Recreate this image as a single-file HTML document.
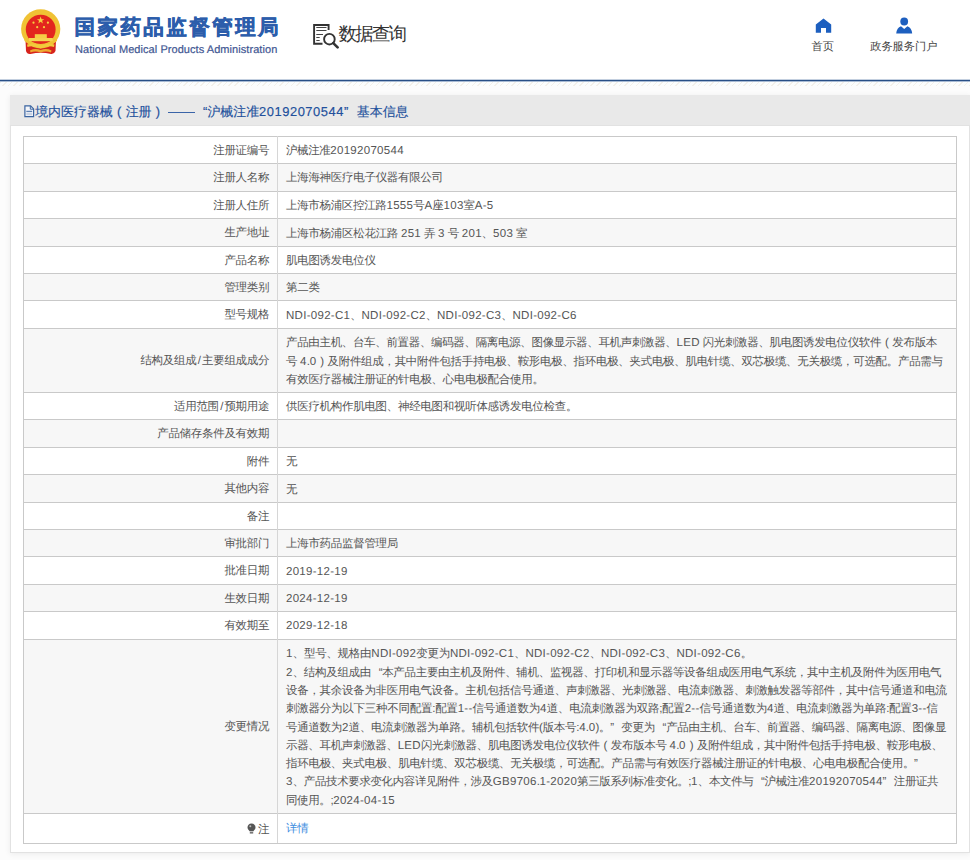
<!DOCTYPE html>
<html><head><meta charset="utf-8">
<style>
*{margin:0;padding:0;box-sizing:border-box}
html,body{width:970px;height:860px;overflow:hidden;background:#fff}
body{font-family:"Liberation Sans",sans-serif;text-rendering:geometricPrecision;position:relative;color:#555}
.a{position:absolute;white-space:nowrap}
.hl{position:absolute;left:23px;width:933px;height:1px;background:#c9c9c9}
.row{position:absolute;left:23px;width:933px}
.lab{position:absolute;right:700.8px;font-size:11.5px;white-space:nowrap;color:#555;letter-spacing:-0.3px}
.ql,.qr{font-style:normal;display:inline-block;width:1em;text-indent:0}
.ql{text-align:right}.pc{font-style:normal;display:inline-block;width:1em;text-align:center}.qr{text-align:left}
.l{font-weight:normal;letter-spacing:0.29px}
.val{position:absolute;left:286px;font-size:11.5px;white-space:nowrap;color:#555;line-height:18.3px;letter-spacing:-0.3px}
.val .ql,.val .qr,.val .pc{width:11.2px}
</style></head><body>


<div class="a" style="left:0;top:0;width:970px;height:80px;background:#fff"></div>
<svg class="a" style="left:18px;top:7px" width="46" height="50" viewBox="0 0 46 50">
  <path d="M7.5 33 L38 33 L37.5 44 Q36 47.5 33 47 Q22.7 44.5 12.5 47 Q9 47.5 8 44 Z" fill="#d7231c"/>
  <circle cx="22.7" cy="21.9" r="19.6" fill="#f0c234"/>
  <circle cx="22.7" cy="22.6" r="14.9" fill="#e3251e"/>
  <path d="M6.5 30 Q22.7 44 39 30 L39 34 Q22.7 47 6.5 34 Z" fill="#f0c234"/>
  <path d="M9 37.5 Q15 35.5 22.7 38.5 Q30.5 35.5 36.5 37.5 L36 40 Q30 38 22.7 41.5 Q15 38 9.5 40 Z" fill="#f3c93c"/>
  <path d="M12 43.5 Q17 41 22.7 43 Q28.5 41 33.5 43.5 L33 45.5 Q28 43.5 22.7 45.5 Q17 43.5 12.5 45.5Z" fill="#f0c234" opacity="0.85"/>
  <rect x="10.8" y="31" width="24" height="3.2" fill="#f6d350"/>
  <rect x="16.8" y="27.2" width="12" height="4" fill="#f5cc45"/>
  <polygon points="22.6,9.6 23.6,12.2 26.3,12.2 24.1,13.8 24.9,16.4 22.6,14.8 20.3,16.4 21.1,13.8 18.9,12.2 21.6,12.2" fill="#f6d040"/>
  <circle cx="15.5" cy="15.7" r="1.1" fill="#f6d040"/><circle cx="29.9" cy="15.7" r="1.1" fill="#f6d040"/>
  <circle cx="19.2" cy="20.2" r="1.1" fill="#f6d040"/><circle cx="26" cy="20.2" r="1.1" fill="#f6d040"/>
</svg>
<div class="a" id="t1" style="left:74.5px;top:13.5px;font-size:20.5px;font-weight:900;color:#2c5dab;letter-spacing:2.45px;-webkit-text-stroke:0.5px #2c5dab">国家药品监督管理局</div>
<div class="a" id="t2" style="left:75px;top:44px;font-size:11px;color:#3f5793;letter-spacing:0.06px;-webkit-text-stroke:0.2px #3f5793">National Medical Products Administration</div>
<svg class="a" style="left:312px;top:23px" width="28" height="26" viewBox="0 0 28 26">
  <path d="M10.5 20.8 H2.1 V2 H16.6 V7" fill="none" stroke="#333" stroke-width="1.9"/>
  <path d="M4.3 4.5 H14.5 M4.3 7.5 H14.5 M4.3 11.5 H11 M4.3 14.5 H7.7 M4.3 17.5 H7.7" stroke="#444" stroke-width="1"/>
  <circle cx="17.4" cy="16.2" r="5.3" fill="none" stroke="#333" stroke-width="1.9"/>
  <path d="M21.3 20.1 L25.6 24.4" stroke="#333" stroke-width="2.6" stroke-linecap="round"/>
</svg>
<div class="a" id="t3" style="left:338.5px;top:21.9px;font-size:18.5px;letter-spacing:-1.8px;color:#333">数据查询</div>
<svg class="a" style="left:815px;top:18px" width="17" height="16" viewBox="0 0 17 16">
  <path d="M8.5 0.5 L16.2 6.5 V14.8 H11 V10 H6 V14.8 H0.8 V6.5 Z" fill="#1d5fbf"/>
</svg>
<div class="a" id="t4" style="left:811.5px;top:40.3px;font-size:11.2px;color:#444">首页</div>
<svg class="a" style="left:895px;top:17px" width="19" height="18" viewBox="0 0 19 18">
  <circle cx="9.2" cy="4.5" r="3.9" fill="#1d5fbf"/>
  <path d="M1.2 16.5 Q1.8 10.5 6 9.2 L9.2 12 L12.4 9.2 Q16.6 10.5 17.2 16.5 Z" fill="#1d5fbf"/>
</svg>
<div class="a" id="t5" style="left:870.2px;top:40.3px;font-size:11.2px;color:#444">政务服务门户</div>
<div class="a" style="left:0;top:79px;width:970px;height:1px;background:#c3cfdf"></div>
<div class="a" style="left:0;top:80px;width:970px;height:1px;background:#284f86"></div>
<div class="a" style="left:0;top:81px;width:970px;height:1px;background:#a9bbd3"></div>


<div class="a" style="left:0;top:82px;width:970px;height:778px;background:#fcfcfc"></div>
<div class="a" style="left:0;top:82px;width:970px;height:4px;background:repeating-linear-gradient(135deg,#f3f0ea 0 1px,#fbfdfd 1px 4px)"></div>
<div class="a" style="left:10px;top:95px;width:960px;height:758px;background:#fff;border:1px solid #e2e2e2;box-shadow:0 1px 6px rgba(0,0,0,0.07)"></div>
<div class="a" style="left:10px;top:95px;width:960px;height:31px;background:#e9e9e9;border-bottom:1px solid #e2e2e2"></div>
<svg class="a" style="left:23px;top:105px" width="12" height="13" viewBox="0 0 12 13">
  <path d="M1.9 0.9 H7.6 L10.6 3.9 V11.6 H1.9 Z" fill="#f4f6fa" stroke="#3a64a0" stroke-width="1.2"/>
  <path d="M7.3 1 V4.2 H10.5" fill="none" stroke="#3a64a0" stroke-width="1"/>
  <path d="M3.3 6.3 H9.2" stroke="#3a64a0" stroke-width="1"/>
  <rect x="3.3" y="7.6" width="5.9" height="2.6" fill="#c9d3e3"/>
</svg>
<div class="a" id="ttl" style="left:35.2px;top:103.7px;font-size:12.93px;color:#22509c;-webkit-text-stroke:0.15px #22509c">境内医疗器械<i class="pc">(</i>注册<i class="pc">)</i><span id="dash" style="display:inline-block;width:27.2px;height:1.2px;background:#3a64a8;vertical-align:middle;margin:0 -0.4px 0 3.3px;position:relative;top:0.5px"></span><i class="ql">“</i>沪械注准<b class="l" style="letter-spacing:0.52px">20192070544</b><i class="qr">”</i>基本信息</div>

<div class="row" style="top:136.00px;height:27.00px;background:#fff"></div>
<div class="row" style="top:163.00px;height:28.00px;background:#f7f7f7"></div>
<div class="row" style="top:191.00px;height:27.00px;background:#fff"></div>
<div class="row" style="top:218.00px;height:28.00px;background:#f7f7f7"></div>
<div class="row" style="top:246.00px;height:27.00px;background:#fff"></div>
<div class="row" style="top:273.00px;height:27.00px;background:#f7f7f7"></div>
<div class="row" style="top:300.00px;height:28.00px;background:#fff"></div>
<div class="row" style="top:328.00px;height:64.00px;background:#f7f7f7"></div>
<div class="row" style="top:392.00px;height:27.00px;background:#fff"></div>
<div class="row" style="top:419.00px;height:28.00px;background:#f7f7f7"></div>
<div class="row" style="top:447.00px;height:27.00px;background:#fff"></div>
<div class="row" style="top:474.00px;height:28.00px;background:#f7f7f7"></div>
<div class="row" style="top:502.00px;height:27.00px;background:#fff"></div>
<div class="row" style="top:529.00px;height:27.00px;background:#f7f7f7"></div>
<div class="row" style="top:556.00px;height:28.00px;background:#fff"></div>
<div class="row" style="top:584.00px;height:27.00px;background:#f7f7f7"></div>
<div class="row" style="top:611.00px;height:28.00px;background:#fff"></div>
<div class="row" style="top:639.00px;height:174.00px;background:#f7f7f7"></div>
<div class="row" style="top:813.00px;height:30.00px;background:#fff"></div>
<div class="hl" style="top:136.00px"></div>
<div class="hl" style="top:163.00px"></div>
<div class="hl" style="top:191.00px"></div>
<div class="hl" style="top:218.00px"></div>
<div class="hl" style="top:246.00px"></div>
<div class="hl" style="top:273.00px"></div>
<div class="hl" style="top:300.00px"></div>
<div class="hl" style="top:328.00px"></div>
<div class="hl" style="top:392.00px"></div>
<div class="hl" style="top:419.00px"></div>
<div class="hl" style="top:447.00px"></div>
<div class="hl" style="top:474.00px"></div>
<div class="hl" style="top:502.00px"></div>
<div class="hl" style="top:529.00px"></div>
<div class="hl" style="top:556.00px"></div>
<div class="hl" style="top:584.00px"></div>
<div class="hl" style="top:611.00px"></div>
<div class="hl" style="top:639.00px"></div>
<div class="hl" style="top:813.00px"></div>
<div class="hl" style="top:843.00px"></div>
<div class="a" style="left:23px;top:136px;width:1px;height:708.00px;background:#c9c9c9"></div>
<div class="a" style="left:956px;top:136px;width:1px;height:708.00px;background:#c9c9c9"></div>
<div class="a" style="left:277px;top:136px;width:1px;height:707.00px;background:#d6d6d6"></div>
<div class="lab" id="l0" style="top:143.65px">注册证编号</div>
<div class="val" id="v0" style="top:142.00px"><span id="v0_0" style="letter-spacing:-0.427px">沪械注准<b class="l">20192070544</b></span></div>
<div class="lab" id="l1" style="top:171.00px">注册人名称</div>
<div class="val" id="v1" style="top:169.35px"><span id="v1_0" style="letter-spacing:-0.293px">上海海神医疗电子仪器有限公司</span></div>
<div class="lab" id="l2" style="top:198.50px">注册人住所</div>
<div class="val" id="v2" style="top:196.85px"><span id="v2_0" style="letter-spacing:-0.339px">上海市杨浦区控江路<b class="l">1555</b>号<b class="l">A</b>座<b class="l">103</b>室<b class="l">A-5</b></span></div>
<div class="lab" id="l3" style="top:226.20px">生产地址</div>
<div class="val" id="v3" style="top:224.55px"><span id="v3_0" style="letter-spacing:-0.293px">上海市杨浦区松花江路 <b class="l">251</b> 弄 <b class="l">3</b> 号 <b class="l">201</b>、<b class="l">503</b> 室</span></div>
<div class="lab" id="l4" style="top:253.70px">产品名称</div>
<div class="val" id="v4" style="top:252.05px"><span id="v4_0" style="letter-spacing:-0.300px">肌电图诱发电位仪</span></div>
<div class="lab" id="l5" style="top:280.70px">管理类别</div>
<div class="val" id="v5" style="top:279.05px"><span id="v5_0" style="letter-spacing:-0.300px">第二类</span></div>
<div class="lab" id="l6" style="top:308.15px">型号规格</div>
<div class="val" id="v6" style="top:306.50px"><span id="v6_0" style="letter-spacing:-0.293px"><b class="l">NDI-092-C1</b>、<b class="l">NDI-092-C2</b>、<b class="l">NDI-092-C3</b>、<b class="l">NDI-092-C6</b></span></div>
<div class="lab" id="l7" style="top:354.25px">结构及组成<span style="margin:0 1.35px">/</span>主要组成成分</div>
<div class="val" id="v7" style="top:334.30px"><span id="v7_0" style="letter-spacing:-0.342px">产品由主机、台车、前置器、编码器、隔离电源、图像显示器、耳机声刺激器、<b class="l">LED</b> 闪光刺激器、肌电图诱发电位仪软件<i class="pc">(</i>发布版本</span><br><span id="v7_1" style="letter-spacing:-0.315px">号 <b class="l">4</b>.<b class="l">0</b><i class="pc">)</i>及附件组成，其中附件包括手持电极、鞍形电极、指环电极、夹式电极、肌电针缆、双芯极缆、无关极缆，可选配。产品需与</span><br><span id="v7_2" style="letter-spacing:-0.300px">有效医疗器械注册证的针电极、心电电极配合使用。</span></div>
<div class="lab" id="l8" style="top:399.80px">适用范围<span style="margin:0 1.35px">/</span>预期用途</div>
<div class="val" id="v8" style="top:398.15px"><span id="v8_0" style="letter-spacing:-0.300px">供医疗机构作肌电图、神经电图和视听体感诱发电位检查。</span></div>
<div class="lab" id="l9" style="top:427.10px">产品储存条件及有效期</div>
<div class="val" id="v9" style="top:425.45px"><span id="v9_0" style="letter-spacing:-0.300px"></span></div>
<div class="lab" id="l10" style="top:454.65px">附件</div>
<div class="val" id="v10" style="top:453.00px"><span id="v10_0" style="letter-spacing:-0.300px">无</span></div>
<div class="lab" id="l11" style="top:482.25px">其他内容</div>
<div class="val" id="v11" style="top:480.60px"><span id="v11_0" style="letter-spacing:-0.300px">无</span></div>
<div class="lab" id="l12" style="top:509.75px">备注</div>
<div class="val" id="v12" style="top:508.10px"><span id="v12_0" style="letter-spacing:-0.300px"></span></div>
<div class="lab" id="l13" style="top:536.70px">审批部门</div>
<div class="val" id="v13" style="top:535.05px"><span id="v13_0" style="letter-spacing:-0.300px">上海市药品监督管理局</span></div>
<div class="lab" id="l14" style="top:564.15px">批准日期</div>
<div class="val" id="v14" style="top:562.50px"><span id="v14_0" style="letter-spacing:-0.270px"><b class="l">2019-12-19</b></span></div>
<div class="lab" id="l15" style="top:591.60px">生效日期</div>
<div class="val" id="v15" style="top:589.95px"><span id="v15_0" style="letter-spacing:-0.270px"><b class="l">2024-12-19</b></span></div>
<div class="lab" id="l16" style="top:619.10px">有效期至</div>
<div class="val" id="v16" style="top:617.45px"><span id="v16_0" style="letter-spacing:-0.270px"><b class="l">2029-12-18</b></span></div>
<div class="lab" id="l17" style="top:720.20px">变更情况</div>
<div class="val" id="v17" style="top:645.35px"><span id="v17_0" style="letter-spacing:-0.268px"><b class="l">1</b>、型号、规格由<b class="l">NDI-092</b>变更为<b class="l">NDI-092-C1</b>、<b class="l">NDI-092-C2</b>、<b class="l">NDI-092-C3</b>、<b class="l">NDI-092-C6</b>。</span><br><span id="v17_1" style="letter-spacing:-0.317px"><b class="l">2</b>、结构及组成由<i class="ql">“</i>本产品主要由主机及附件、辅机、监视器、打印机和显示器等设备组成医用电气系统，其中主机及附件为医用电气</span><br><span id="v17_2" style="letter-spacing:-0.300px">设备，其余设备为非医用电气设备。主机包括信号通道、声刺激器、光刺激器、电流刺激器、刺激触发器等部件，其中信号通道和电流</span><br><span id="v17_3" style="letter-spacing:-0.255px">刺激器分为以下三种不同配置:配置<b class="l">1--</b>信号通道数为<b class="l">4</b>道、电流刺激器为双路;配置<b class="l">2--</b>信号通道数为<b class="l">4</b>道、电流刺激器为单路:配置<b class="l">3--</b>信</span><br><span id="v17_4" style="letter-spacing:-0.300px">号通道数为<b class="l">2</b>道、电流刺激器为单路。辅机包括软件(版本号:<b class="l">4</b>.<b class="l">0</b>)。<i class="qr">”</i>变更为<i class="ql">“</i>产品由主机、台车、前置器、编码器、隔离电源、图像显</span><br><span id="v17_5" style="letter-spacing:-0.332px">示器、耳机声刺激器、<b class="l">LED</b>闪光刺激器、肌电图诱发电位仪软件<i class="pc">(</i>发布版本号 <b class="l">4</b>.<b class="l">0</b><i class="pc">)</i>及附件组成，其中附件包括手持电极、鞍形电极、</span><br><span id="v17_6" style="letter-spacing:-0.284px">指环电极、夹式电极、肌电针缆、双芯极缆、无关极缆，可选配。产品需与有效医疗器械注册证的针电极、心电电极配合使用。<i class="qr">”</i></span><br><span id="v17_7" style="letter-spacing:-0.384px"><b class="l">3</b>、产品技术要求变化内容详见附件，涉及<b class="l">GB9706</b>.<b class="l">1-2020</b>第三版系列标准变化。;<b class="l">1</b>、本文件与<i class="ql">“</i>沪械注准<b class="l">20192070544</b><i class="qr">”</i>注册证共</span><br><span id="v17_8" style="letter-spacing:-0.400px">同使用。;<b class="l">2024-04-15</b></span></div>
<div class="lab" id="l18" style="top:823.00px"><svg width="9" height="11" viewBox="0 0 9 11" style="vertical-align:-1px;margin-right:2px"><path d="M4.5 0.5 C7 0.5 8.5 2.3 8.5 4.4 C8.5 6.3 6.8 7.2 6.5 8.3 H2.5 C2.2 7.2 0.5 6.3 0.5 4.4 C0.5 2.3 2 0.5 4.5 0.5Z" fill="#555"/><rect x="2.8" y="8.8" width="3.4" height="1.8" fill="#777"/><circle cx="3.3" cy="3.3" r="1" fill="#bbb"/></svg>注</div>
<div class="val" id="v18" style="top:819.85px;color:#3d8de0">详情</div>
</body></html>
